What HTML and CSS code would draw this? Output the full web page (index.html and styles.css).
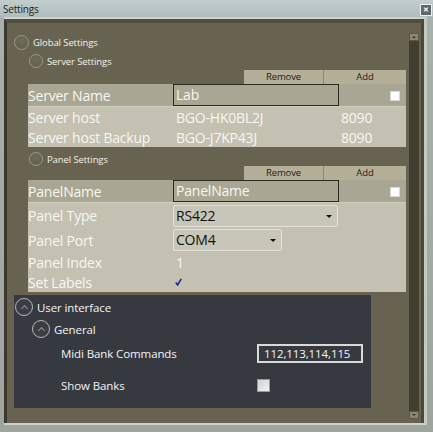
FILE: index.html
```html
<!doctype html>
<html lang="en">
<head>
  <title>Settings</title>
  <meta charset="utf-8">
  <link rel="stylesheet" href="styles.css">
</head>
<body>
  <div class="window">
    <div class="titlebar">
      <span class="title">Settings</span>
      <span class="close">&#x2715;</span>
    </div>
    <div class="frame">
      <div class="client">
        <div class="content">
          <div class="expander top"><span class="ring"></span>Global Settings</div>
          <div class="group">
            <div class="expander sub server-head"><span class="ring small"></span>Server Settings</div>
            <div class="actions"><span class="btn remove">Remove</span><span class="btn add">Add</span></div>
            <div class="grid">
              <div class="row key">
                <span class="label">Server Name</span>
                <span class="value"><span class="textbox">Lab</span></span>
                <span class="extra"><span class="box"></span></span>
              </div>
              <div class="row">
                <span class="label">Server host</span>
                <span class="value">BGO-HK0BL2J</span>
                <span class="extra">8090</span>
              </div>
              <div class="row">
                <span class="label">Server host Backup</span>
                <span class="value">BGO-J7KP43J</span>
                <span class="extra">8090</span>
              </div>
            </div>

            <div class="expander sub panel-head"><span class="ring small"></span>Panel Settings</div>
            <div class="actions"><span class="btn remove">Remove</span><span class="btn add">Add</span></div>
            <div class="grid">
              <div class="row key">
                <span class="label">PanelName</span>
                <span class="value"><span class="textbox">PanelName</span></span>
                <span class="extra"><span class="box"></span></span>
              </div>
              <div class="row tall type">
                <span class="label">Panel Type</span>
                <span class="value"><span class="select wide">RS422<span class="caret"></span></span></span>
                <span class="extra"></span>
              </div>
              <div class="row tall">
                <span class="label">Panel Port</span>
                <span class="value"><span class="select narrow">COM4<span class="caret"></span></span></span>
                <span class="extra"></span>
              </div>
              <div class="row">
                <span class="label">Panel Index</span>
                <span class="value">1</span>
                <span class="extra"></span>
              </div>
              <div class="row">
                <span class="label">Set Labels</span>
                <span class="value">
                  <svg class="check" width="7" height="8" viewBox="0 0 7 8">
                    <path d="M0.8 4.6 L2.6 7 L6.2 0.8" fill="none" stroke="#1b2a8c" stroke-width="1.6"/>
                  </svg>
                </span>
                <span class="extra"></span>
              </div>
            </div>
          </div>

          <div class="dark">
            <div class="dark-head"><span class="ring big"><span class="chev"></span></span>User interface</div>
            <div class="dark-head general"><span class="ring big"><span class="chev"></span></span>General</div>
            <div class="prop first">
              <span class="prop-label">Midi Bank Commands</span>
              <span class="prop-input">112,113,114,115</span>
            </div>
            <div class="prop second">
              <span class="prop-label">Show Banks</span>
              <span class="prop-check"></span>
            </div>
          </div>
        </div>
        <div class="scrollbar">
          <span class="arrow up"></span>
          <span class="arrow down"></span>
        </div>
      </div>
    </div>
  </div>
</body>
</html>
```

FILE: styles.css
```css
html, body {
  margin: 0;
  padding: 0;
}

body {
  font-family: "Open Sans", "Noto Sans", sans-serif;
  background: #a3aaa6;
}

.window {
  width: 433px;
  height: 432px;
  display: flex;
  flex-direction: column;
  background: linear-gradient(#a9b1ad, #9ea59f);
  overflow: hidden;
}

.titlebar {
  height: 17px;
  display: flex;
  align-items: center;
  justify-content: space-between;
  background: linear-gradient(#c3cdce, #aebcbd);
}

.title {
  font-size: 10px;
  color: #1b1f20;
  padding-left: 3px;
  letter-spacing: -0.2px;
}

.close {
  width: 10px;
  height: 10px;
  margin-right: 1px;
  margin-top: 2px;
  border: 1px solid #eef2f2;
  background: #5e6868;
  color: #ffffff;
  font-size: 7px;
  line-height: 10px;
  text-align: center;
  font-weight: bold;
}

.frame {
  flex: 1;
  display: flex;
  margin: 0 6px 7px 4px;
  border-top: 2px solid #cdd3cf;
  border-right: 3px solid #c6c9c1;
  border-bottom: 2px solid #cfd1c9;
}

.client {
  flex: 1;
  display: flex;
  background: #676350;
  border-top: 4px solid #514e3d;
  border-left: 3px solid #3a382d;
  border-right: 3px solid #4c493a;
}

.content {
  flex: 1;
  padding: 12px 3px 0 7px;
}

.scrollbar {
  width: 10px;
  margin: 10px 2px 4px 0;
  background: #423f31;
  display: flex;
  flex-direction: column;
  justify-content: space-between;
}

.arrow {
  height: 8px;
  background: #8a8671;
  border: 1px solid #5a5745;
  box-sizing: border-box;
  position: relative;
}

.arrow::after {
  content: "";
  position: absolute;
  left: 2px;
  border-left: 2px solid transparent;
  border-right: 2px solid transparent;
}

.arrow.up::after {
  top: 2px;
  border-bottom: 2px solid #3a382c;
}

.arrow.down::after {
  top: 2px;
  border-top: 2px solid #3a382c;
}

/* expanders */

.expander {
  display: flex;
  align-items: center;
  gap: 4px;
  color: #f2f1ea;
  font-size: 9.5px;
  letter-spacing: -0.1px;
}

.expander.top {
  height: 15px;
}

.expander.sub {
  height: 14px;
  margin-left: 1px;
}

.server-head {
  margin-top: 4px;
  margin-bottom: 2px;
}

.panel-head {
  margin-top: 5px;
}

.ring {
  width: 15px;
  height: 15px;
  border-radius: 50%;
  border: 1px solid #9b998a;
  box-sizing: border-box;
  background: radial-gradient(circle at 50% 35%, #6f6c5a, #605d4a);
  flex: none;
}

.ring.small {
  width: 14px;
  height: 14px;
}

.group {
  padding-left: 14px;
}

.actions {
  display: flex;
  justify-content: flex-end;
  height: 14px;
}

.btn {
  background: #b4af98;
  color: #1d1d1a;
  font-size: 9.5px;
  line-height: 14px;
  text-align: center;
  letter-spacing: -0.1px;
}

.btn.remove {
  width: 79px;
  border-right: 1px solid #8d8975;
}

.btn.add {
  width: 82px;
}

/* property grid */

.grid {
  background: #c4c1b2;
}

.row {
  display: grid;
  grid-template-columns: 145px 168px 1fr;
  align-items: center;
  height: 20px;
  color: #f7f7f2;
  font-size: 14px;
  letter-spacing: -0.2px;
}

.row.key {
  height: 23px;
  padding-top: 1px;
  background: #a9a694;
  border-bottom: 1px solid #cfcdbf;
  box-sizing: border-box;
}

.row.tall {
  height: 24px;
}

.row.type {
  height: 25px;
}

.label {
  white-space: nowrap;
}

.value {
  display: flex;
  align-items: center;
  padding-left: 3px;
}

.row.key .value,
.row.tall .value {
  padding-left: 0;
}

.textbox {
  width: 166px;
  height: 22px;
  box-sizing: border-box;
  border: 1px solid #2c2b22;
  padding-left: 2px;
  line-height: 20px;
  margin-top: -1px;
}

.select {
  position: relative;
  height: 22px;
  box-sizing: border-box;
  border: 1px solid #e4e2d8;
  border-radius: 2px;
  background: #c8c6b8;
  color: #111111;
  padding-left: 2px;
  line-height: 20px;
}

.select.wide {
  width: 165px;
}

.select.narrow {
  width: 109px;
}

.caret {
  position: absolute;
  right: 5px;
  top: 9px;
  border-left: 3px solid transparent;
  border-right: 3px solid transparent;
  border-top: 3px solid #111111;
}

.extra {
  display: flex;
  justify-content: flex-start;
  padding-right: 6px;
}

.box {
  width: 10px;
  height: 10px;
  box-sizing: border-box;
  border: 1px solid #d8d8d2;
  background: #ffffff;
  margin-left: auto;
}

.check {
  display: block;
  margin-left: -1px;
}

/* user interface section */

.dark {
  margin-top: 3px;
  width: 357px;
  height: 113px;
  background: #363940;
  padding: 3px 0 0 1px;
  box-sizing: border-box;
  color: #f4f4f4;
}

.dark-head {
  display: flex;
  align-items: center;
  gap: 4px;
  height: 18px;
  font-size: 11.5px;
  letter-spacing: -0.1px;
}

.dark-head.general {
  margin-top: 4px;
  padding-left: 17px;
}

.ring.big {
  width: 18px;
  height: 18px;
  border: 1.5px solid #b5b6b8;
  background: #3a3d44;
  display: flex;
  align-items: center;
  justify-content: center;
}

.chev {
  width: 4px;
  height: 4px;
  border-left: 1.5px solid #8f9195;
  border-top: 1.5px solid #8f9195;
  transform: rotate(45deg);
  margin-top: 3px;
}

.prop {
  display: grid;
  grid-template-columns: 196px 1fr;
  align-items: center;
  padding-left: 46px;
  font-size: 11.5px;
  letter-spacing: -0.1px;
}

.prop.first {
  margin-top: 6px;
  height: 19px;
}

.prop.second {
  margin-top: 15px;
  height: 13px;
}

.prop-input {
  width: 106px;
  height: 19px;
  box-sizing: border-box;
  border: 2px solid #d9d9d9;
  padding-left: 5px;
  line-height: 15px;
  font-size: 11.5px;
}

.prop-check {
  width: 13px;
  height: 13px;
  box-sizing: border-box;
  border: 1px solid #9a9a9a;
  background: linear-gradient(135deg, #cfd0d2, #f2f2f2);
}
```
